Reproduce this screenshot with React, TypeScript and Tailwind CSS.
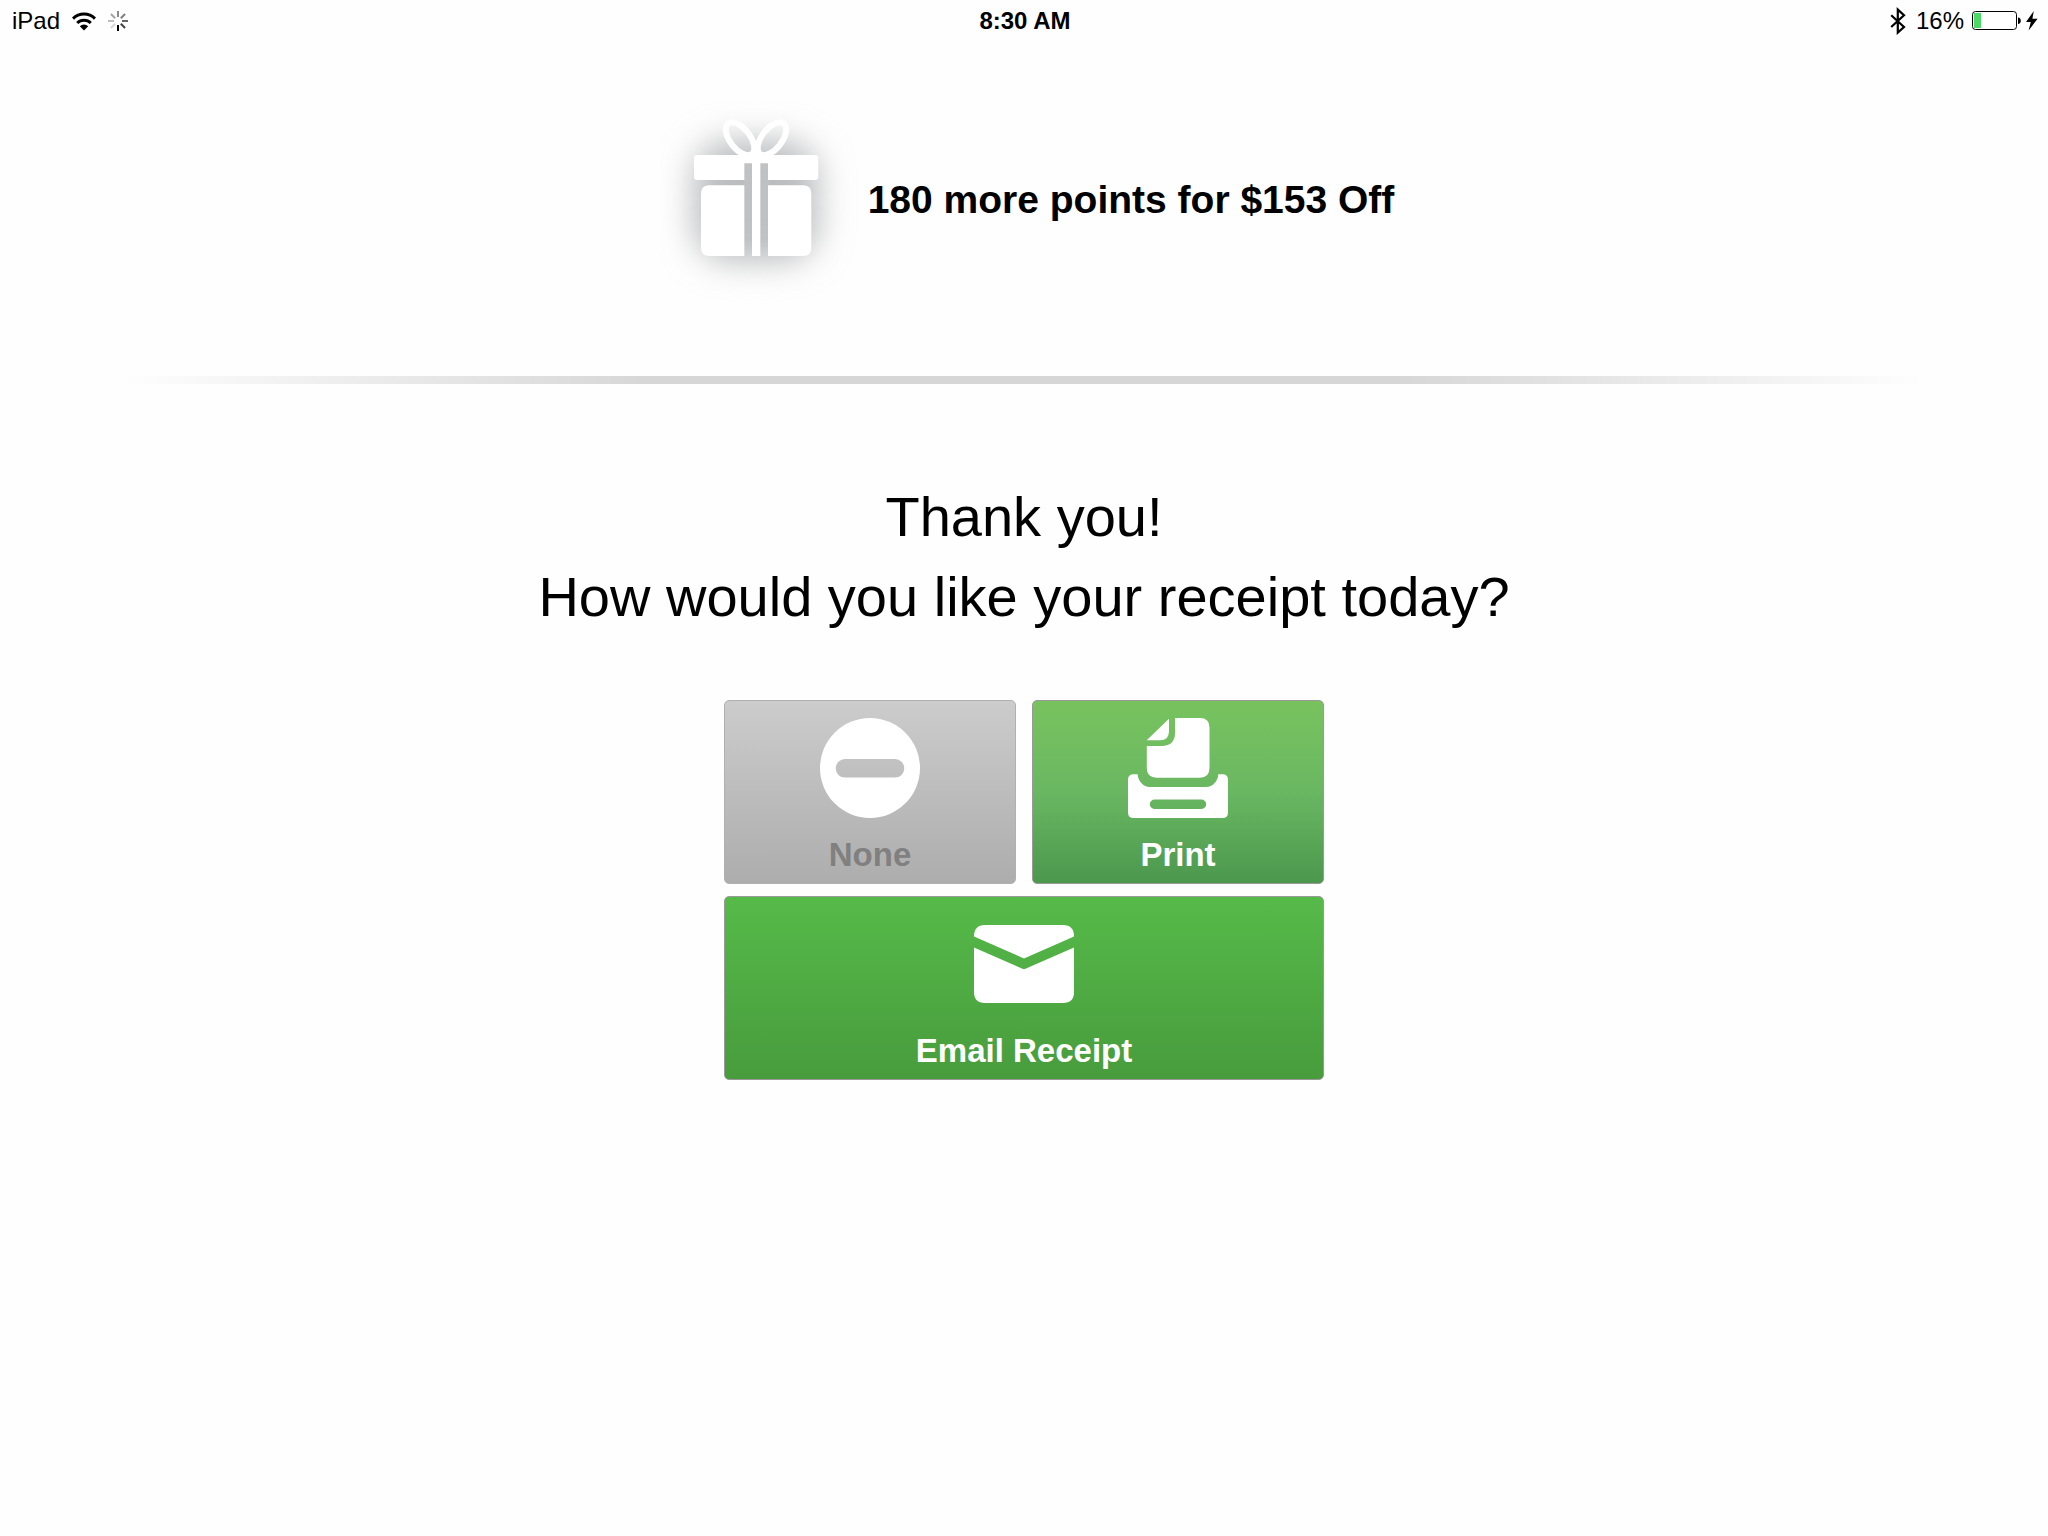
import React from "react";

function WifiIcon() {
  return (
    <svg className="h-5 w-6" viewBox="0 0 24 20" fill="none" stroke="black" strokeWidth="3">
      <path d="M1 7.6a15.6 15.6 0 0 1 22 0" />
      <path d="M5.2 12a9.7 9.7 0 0 1 13.6 0" />
      <path d="M12 19.4l-4.2-4.2a6 6 0 0 1 8.4 0z" fill="black" stroke="none" />
    </svg>
  );
}

const spokes = [0.45, 0.5, 0.6, 0.75, 1, 0.15, 0.25, 0.35];

function Spinner() {
  return (
    <svg className="size-5" viewBox="0 0 20 20" stroke="black" strokeWidth="2">
      {spokes.map((opacity, i) => (
        <path key={i} d="M10 0v6" opacity={opacity} transform={`rotate(${i * 45} 10 10)`} />
      ))}
    </svg>
  );
}

function BluetoothIcon() {
  return (
    <svg className="h-7 w-4" viewBox="0 0 16 28" fill="none" stroke="black" strokeWidth="2.2">
      <path d="M1.2 8.2L14 20l-6.2 5.6V2.6L14 8.2 1.2 20" />
    </svg>
  );
}

function BatteryIcon() {
  return (
    <svg className="h-5 w-[50px]" viewBox="0 0 50 20">
      <rect x="0.5" y="0.5" width="44" height="18" rx="3" fill="white" stroke="black" />
      <rect x="2" y="2" width="7" height="15" fill="#4cd964" />
      <path d="M46 6.500c1.800 0 2.800 1.400 2.800 3.300s-1 3.300-2.800 3.300z" />
    </svg>
  );
}

function BoltIcon() {
  return (
    <svg className="h-5 w-3" viewBox="0 0 12 20">
      <path d="M7.8 0L0 11h4.8L2.6 19.5 11.6 7.8H6.4z" />
    </svg>
  );
}

function GiftIcon() {
  return (
    <svg className="h-[210px] w-[200px] shrink-0" viewBox="0 15 600 630">
      <defs>
        <filter id="glow" x="-60%" y="-60%" width="220%" height="220%">
          <feGaussianBlur stdDeviation="50" />
        </filter>
      </defs>
      <rect x="100" y="150" width="376" height="366" rx="110" fill="#bbbdbf" filter="url(#glow)" />
      <rect x="250" y="215" width="78" height="230" fill="#c1c3c5" opacity="0.5" />
      <g fill="white">
        <path d="M110 195H466q9 0 9 9V261q0 9-9 9H324V220H301V498H276V220H253V270H111q-9 0-9-9V204q0-9 8-9z" />
        <path d="M148 286H253V498H148q-25 0-25-25V311q0-25 25-25z" />
        <path d="M324 286H429q25 0 25 25V473q0 25-25 25H324z" />
      </g>
      <g fill="none" stroke="white" strokeWidth="18">
        <ellipse cx="240" cy="146" rx="58" ry="30" transform="rotate(52 240 146)" />
        <ellipse cx="336" cy="146" rx="58" ry="30" transform="rotate(-52 336 146)" />
        <path d="M288 152V200" />
      </g>
    </svg>
  );
}

function NoneIcon() {
  return (
    <svg className="size-[100px]" viewBox="0 0 100 100" fill="white">
      <path
        fillRule="evenodd"
        d="M50 0a50 50 0 1 1 0 100a50 50 0 1 1 0-100zM25 41a9.3 9.3 0 0 0 0 18.6H75a9.3 9.3 0 0 0 0-18.6z"
      />
    </svg>
  );
}

function PrintIcon() {
  return (
    <svg className="size-[100px]" viewBox="0 0 100 100" fill="white">
      <path d="M18.7 22.3L41 0.8V13q0 9.3-9 9.3z" />
      <path d="M47 0H72q9.5 0 9.5 9.5V50q0 9.7-9.5 9.7H28.5q-9.7 0-9.7-9.7V28H35q12-1 12-13z" />
      <path
        fillRule="evenodd"
        d="M5.5 56.3H9.7C10 63 15 69 22 69H78C85 69 90 63 90.3 56.3H94.5q5.5 0 5.5 5.5V94.5q0 5.5-5.5 5.5H5.5q-5.5 0-5.5-5.5V61.8q0-5.5 5.5-5.5zM26.5 81.5a4.7 4.7 0 0 0 0 9.4H73.5a4.7 4.7 0 0 0 0-9.4z"
      />
    </svg>
  );
}

function EmailIcon() {
  return (
    <svg className="size-[100px]" viewBox="0 0 100 100" fill="white">
      <path d="M11 11H89q11 0 11 11.5L50 44.5L0 22.5Q0 11 11 11z" />
      <path d="M0 33.5L48 54.5q2 1 4 0L100 33.5V78q0 11-11 11H11Q0 89 0 78z" />
    </svg>
  );
}

const buttonBase =
  "flex flex-col items-center gap-[15px] rounded-[5px] border pt-[17px] pb-[6px] text-[33px] leading-[44px] font-bold";

export default function App() {
  return (
    <div className="min-h-screen bg-[#fefefe] font-['Liberation_Sans',Arial,sans-serif] text-black">
      {/* Status bar */}
      <header className="grid h-[42px] grid-cols-3 items-center pr-2.5 pl-3 text-2xl">
        <div className="flex items-center gap-3">
          <span>iPad</span>
          <WifiIcon />
          <Spinner />
        </div>
        <time className="text-center font-bold">8:30 AM</time>
        <div className="flex items-center justify-end">
          <BluetoothIcon />
          <span className="mr-2 ml-2.5">16%</span>
          <BatteryIcon />
          <span className="ml-1">
            <BoltIcon />
          </span>
        </div>
      </header>

      <main className="flex flex-col items-center">
        {/* Rewards progress */}
        <section className="mt-[53px] flex items-center gap-2 pl-1.5">
          <GiftIcon />
          <p className="text-[39px] leading-[48px] font-bold">180 more points for $153 Off</p>
        </section>

        <hr className="mt-[71px] h-2 w-full border-0 bg-[linear-gradient(to_right,transparent_6%,#d7d6d7_32%,#d7d6d7_68%,transparent_94%)]" />

        <h1 className="mt-[93px] text-center text-[56px] leading-[80px]">
          Thank you!
          <br />
          How would you like your receipt today?
        </h1>

        {/* Receipt options */}
        <div className="mt-[63px] grid w-[600px] max-w-full grid-cols-2 gap-x-4 gap-y-3">
          <button
            type="button"
            className={`${buttonBase} border-[#b0b0b0] bg-linear-to-b from-[#cccccc] to-[#adadad] text-[#808080]`}
          >
            <NoneIcon />
            None
          </button>
          <button
            type="button"
            className={`${buttonBase} border-[#999999] bg-linear-to-b from-[#78c35e] via-[#6ab762] to-[#4b984e] text-white`}
          >
            <PrintIcon />
            Print
          </button>
          <button
            type="button"
            className={`${buttonBase} col-span-2 border-[#999999] bg-linear-to-b from-[#56ba49] to-[#489c3d] text-white`}
          >
            <EmailIcon />
            Email Receipt
          </button>
        </div>
      </main>
    </div>
  );
}
